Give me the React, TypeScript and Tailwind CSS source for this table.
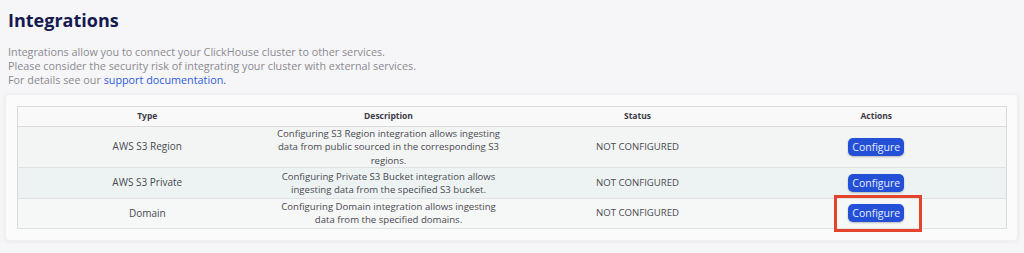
import React from "react";

interface IntegrationRow {
  type: string;
  description: string[];
  status: string;
  rowClass: string;
  highlighted?: boolean;
}

const rows: IntegrationRow[] = [
  {
    type: "AWS S3 Region",
    description: [
      "Configuring S3 Region integration allows ingesting",
      "data from public sourced in the corresponding S3",
      "regions.",
    ],
    status: "NOT CONFIGURED",
    rowClass: "h-[40px] bg-[#f3f5f5]",
  },
  {
    type: "AWS S3 Private",
    description: [
      "Configuring Private S3 Bucket integration allows",
      "ingesting data from the specified S3 bucket.",
    ],
    status: "NOT CONFIGURED",
    rowClass: "h-[31px] bg-[#edf3f3]",
  },
  {
    type: "Domain",
    description: [
      "Configuring Domain integration allows ingesting",
      "data from the specified domains.",
    ],
    status: "NOT CONFIGURED",
    rowClass: "h-[30px] bg-[#f6f7f7]",
    highlighted: true,
  },
];

const ConfigureButton = ({ highlighted }: { highlighted?: boolean }) => (
  <span className="relative inline-block align-middle">
    <button className="block w-[56px] h-[18px] rounded-[5px] bg-[#2350d6] text-[#e6ecff] text-[10.5px] leading-[18px] shadow-[0_1px_2px_rgba(0,0,0,0.25)]">
      Configure
    </button>
    {highlighted && (
      <span className="absolute left-[-14px] top-[-9px] w-[88px] h-[37px] border-[3px] border-[#e6432c]" />
    )}
  </span>
);

const App = () => {
  return (
    <div className="w-[1024px] h-[253px] bg-[#f6f6f8] font-['Open_Sans',sans-serif] pt-[8px]">
      <h1 className="ml-[8px] text-[18px] leading-[24px] font-bold text-[#141a4f]">
        Integrations
      </h1>
      <div className="ml-[8px] mt-[13px] text-[10.8px] leading-[14px] text-[#8a8a90]">
        <p>Integrations allow you to connect your ClickHouse cluster to other services.</p>
        <p>Please consider the security risk of integrating your cluster with external services.</p>
        <p>
          For details see our <a className="text-[#2f5bdb]">support documentation.</a>
        </p>
      </div>
      <div className="mt-[7px] ml-[5px] w-[1013px] p-[11px] rounded-[4px] bg-[#fbfbfb] border border-[#f0f0f2] shadow-[0_1px_4px_rgba(0,0,0,0.06)]">
        <table className="w-[989px] table-fixed border-collapse border border-[#d9dcdc] text-center text-[10px] text-[#4a4a52]">
          <colgroup>
            <col className="w-[259px]" />
            <col className="w-[224px]" />
            <col className="w-[274px]" />
            <col className="w-[232px]" />
          </colgroup>
          <thead>
            <tr className="h-[20px] bg-[#f9f9f9] border-b border-[#d9dcdc]">
              <th className="p-0 text-[8.5px] font-bold text-[#3b3b48]">Type</th>
              <th className="p-0 text-[8.5px] font-bold text-[#3b3b48]">Description</th>
              <th className="p-0 text-[8.5px] font-bold text-[#3b3b48]">Status</th>
              <th className="p-0 text-[8.5px] font-bold text-[#3b3b48] pr-[28px]">Actions</th>
            </tr>
          </thead>
          <tbody>
            {rows.map((row, idx) => (
              <tr key={idx} className={`${row.rowClass} border-b border-[#dfe2e2]`}>
                <td className="p-0">{row.type}</td>
                <td className="p-0 text-[9.6px] leading-[13.3px] whitespace-nowrap">
                  {row.description.map((line, i) => (
                    <div key={i}>{line}</div>
                  ))}
                </td>
                <td className="p-0 text-[9.6px]">{row.status}</td>
                <td className="p-0 pr-[28px]">
                  <ConfigureButton highlighted={row.highlighted} />
                </td>
              </tr>
            ))}
          </tbody>
        </table>
      </div>
    </div>
  );
};

export default App;
